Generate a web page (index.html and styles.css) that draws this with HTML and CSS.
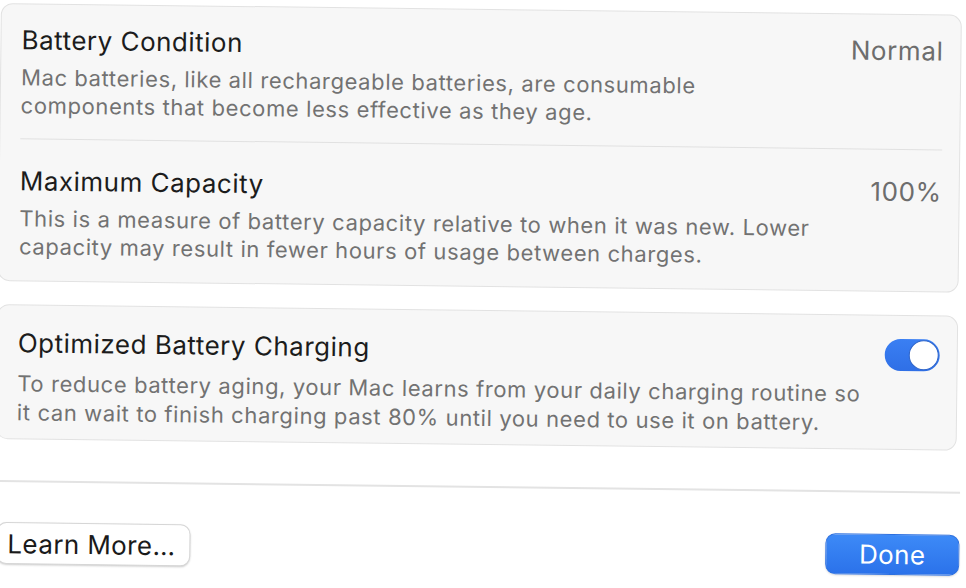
FILE: index.html
```html
<!DOCTYPE html>
<html lang="en">
<head>
<meta charset="utf-8">
<title>Battery</title>
<link rel="stylesheet" href="styles.css">
</head>
<body>
<div class="sheet">
  <section class="card">
    <div class="row">
      <div class="text">
        <div class="title">Battery Condition</div>
        <div class="desc">Mac batteries, like all rechargeable batteries, are consumable<br>components that become less effective as they age.</div>
      </div>
      <div class="value">Normal</div>
    </div>
    <div class="row sep">
      <div class="text">
        <div class="title">Maximum Capacity</div>
        <div class="desc">This is a measure of battery capacity relative to when it was new. Lower<br>capacity may result in fewer hours of usage between charges.</div>
      </div>
      <div class="value">100%</div>
    </div>
  </section>
  <section class="card card-opt">
    <div class="row">
      <div class="text">
        <div class="title">Optimized Battery Charging</div>
        <div class="desc">To reduce battery aging, your Mac learns from your daily charging routine so<br>it can wait to finish charging past 80% until you need to use it on battery.</div>
      </div>
      <div class="toggle"><span class="knob"></span></div>
    </div>
  </section>
  <div class="divider"></div>
  <footer class="footer">
    <button class="btn btn-secondary">Learn More…</button>
    <button class="btn btn-primary">Done</button>
  </footer>
</div>
</body>
</html>
```

FILE: styles.css
```css
html, body {
  margin: 0;
  padding: 0;
  background: #ffffff;
  overflow: hidden;
}
body {
  font-family: Inter, "Noto Sans", "Liberation Sans", sans-serif;
  color: #1d1d1f;
  width: 966px;
  height: 588px;
}
.sheet {
  transform: rotate(0.7deg);
  transform-origin: 0 0;
  padding-top: 3px;
}
.card {
  margin: 0 4px 0 1px;
  background: #f7f7f7;
  border: 1px solid #e2e2e2;
  border-radius: 12px;
  padding: 0 17px 0 20px;
}
.card-opt {
  margin-top: 23px;
}
.row {
  display: flex;
  justify-content: space-between;
  align-items: flex-start;
  padding: 20px 0 19px;
}
.row.sep {
  border-top: 1px solid #e1e1e1;
  padding-top: 26px;
  padding-bottom: 20px;
}
.card-opt .row {
  padding: 22px 0 11px;
}
.title {
  font-size: 26px;
  line-height: 32px;
  color: #1c1c1c;
  letter-spacing: 0.5px;
}
.desc {
  margin-top: 7px;
  font-size: 22px;
  line-height: 28px;
  color: #727272;
  letter-spacing: 0.6px;
}
.card-opt .desc {
  margin-top: 10px;
  line-height: 29px;
}
.value {
  font-size: 26px;
  line-height: 31px;
  color: #6d6d6d;
  letter-spacing: 0.6px;
}
.toggle {
  width: 55px;
  height: 32px;
  border-radius: 16px;
  background: linear-gradient(#3a7ff3, #2f6fe6);
  margin-top: 1px;
  position: relative;
  box-sizing: border-box;
}
.knob {
  position: absolute;
  right: 1px;
  top: 1px;
  width: 30px;
  height: 30px;
  box-sizing: border-box;
  border-radius: 50%;
  background: #ffffff;
  border: 1.5px solid #2f65c9;
}
.divider {
  margin-top: 41px;
  height: 2px;
  background: #e3e3e3;
}
.footer {
  display: flex;
  justify-content: space-between;
  align-items: center;
  padding: 0 0 0 3px;
  margin-top: 40px;
}
.btn {
  font-family: Inter, "Noto Sans", "Liberation Sans", sans-serif;
  font-size: 26px;
  border-radius: 10px;
  cursor: pointer;
  letter-spacing: 0.4px;
}
.btn-secondary {
  height: 42px;
  width: 194px;
  background: #ffffff;
  color: #1a1a1a;
  border: 1px solid #d6d6d6;
  box-shadow: 0 1px 2px rgba(0,0,0,0.18);
  text-align: left;
  padding: 0 0 0 10px;
}
.btn-primary {
  height: 41px;
  width: 134px;
  background: linear-gradient(#3d8af7, #2b72ea);
  color: #ffffff;
  border: 1px solid #2c6fdf;
  box-shadow: 0 1px 2px rgba(0,0,0,0.15);
}
```
